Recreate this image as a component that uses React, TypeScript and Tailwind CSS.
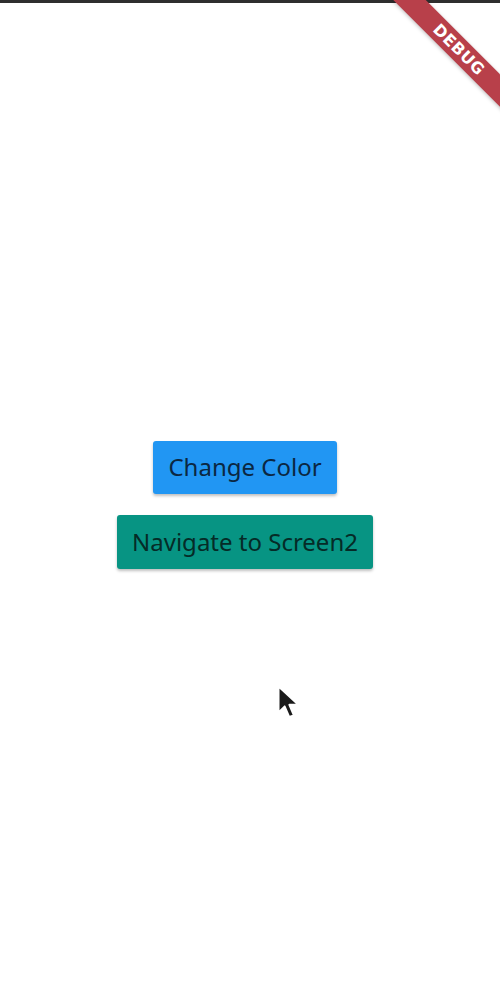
import React from 'react';

// --- cursor drawing ---
const Cursor = () => (
    <svg width="26" height="38" viewBox="0 0 17 25" className="absolute left-[277px] top-[685px] blur-[0.7px]">
        <path d="M1 1 L1 18 L5 14 L8 21 L11 20 L8 13 L14 13 Z" fill="#1a1a1a" stroke="#fff" strokeWidth="1.2" strokeLinejoin="round" />
    </svg>
);

// --- debug banner in the corner ---
const DebugBanner = () => (
    <div className="absolute left-[359px] top-[38px] w-[200px] h-[23px] rotate-45 bg-[#b8404a] shadow-[0_1px_4px_rgba(0,0,0,0.25)] flex items-center justify-center">
        <span className="text-white font-bold text-[16px] tracking-[0.5px]" style={{ fontFamily: '"DejaVu Sans", sans-serif' }}>DEBUG</span>
    </div>
);

export default function App() {
    const font = { fontFamily: '"Noto Sans", "Open Sans", sans-serif' };

    return (
        <div className="relative w-[500px] h-[1000px] bg-white overflow-hidden">
            <div className="h-[3px] bg-[#2e2e2e]" />
            <div className="h-[997px] flex flex-col items-center justify-center gap-[21px] pt-[6px] pr-[10px]">
                <button
                    className="h-[53px] px-[15px] rounded-[3px] bg-[#2196f3] text-[#0b2742] text-[24px] leading-none shadow-[0_2px_3px_rgba(0,0,0,0.25)]"
                    style={font}
                >
                    Change Color
                </button>
                <button
                    className="h-[54px] px-[15px] rounded-[3px] bg-[#079483] text-[#052b27] text-[24px] leading-none shadow-[0_2px_3px_rgba(0,0,0,0.25)]"
                    style={font}
                >
                    Navigate to Screen2
                </button>
            </div>
            <DebugBanner />
            <Cursor />
        </div>
    );
}
